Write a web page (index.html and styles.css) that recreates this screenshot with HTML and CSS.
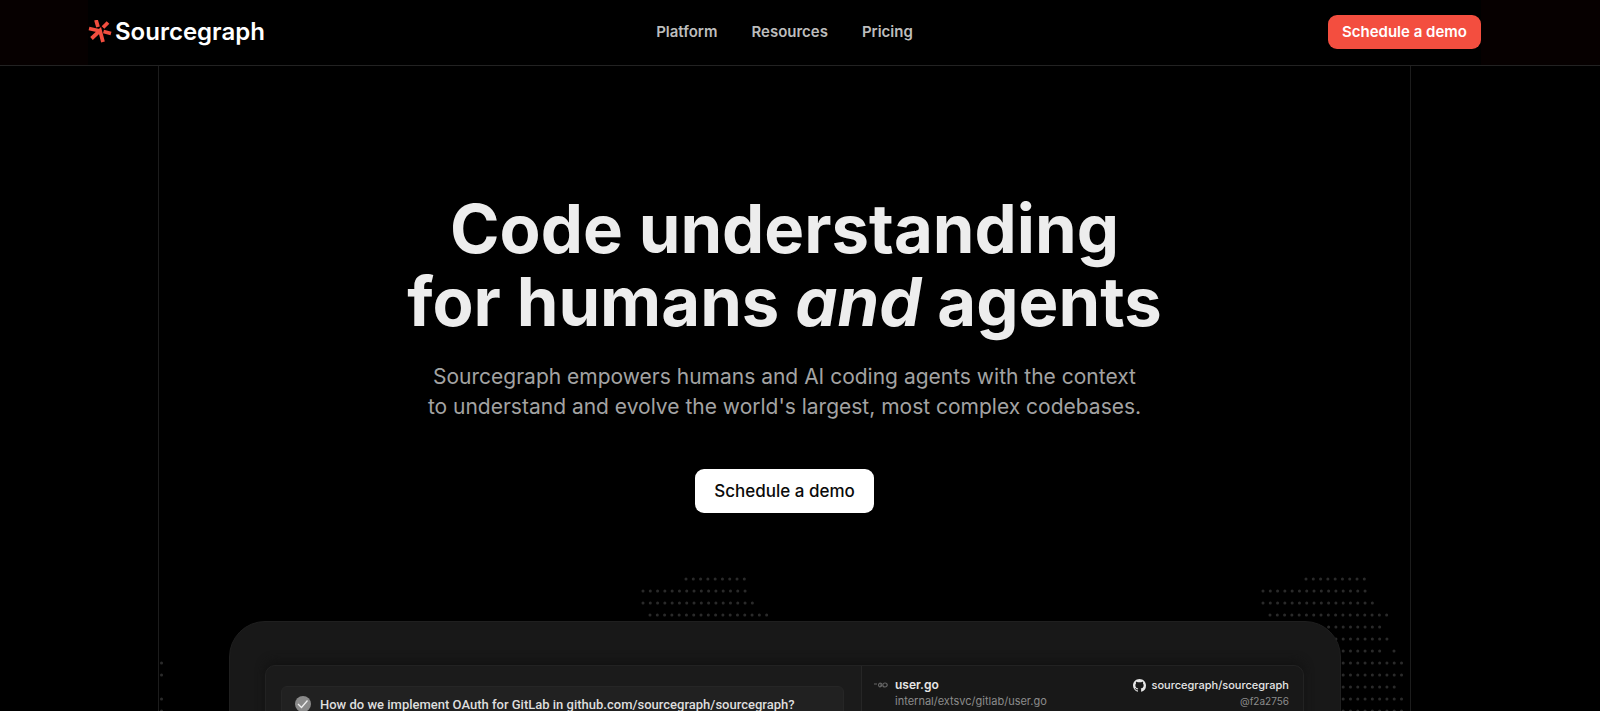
FILE: index.html
```
<!DOCTYPE html>
<html lang="en">
  <head>
    <meta charset="UTF-8" />
    <meta name="viewport" content="width=device-width, initial-scale=1.0" />
    <title>Sourcegraph</title>
    <link rel="stylesheet" href="styles.css">
  </head>
  <body>
    <header class="header">
      <div class="header-inner">
        <a class="logo" href="#">
          <svg class="logo-mark" viewBox="0 0 24 24" width="24" height="24" aria-hidden="true">
            <g stroke="#f34e3f" stroke-width="3.8" fill="none">
              <path d="M8 0l2 7M20 2.500l-5 5M1 8.500l11 2.500M3.500 18.500l8.500-8l3 11.500M15.500 11.500l7.500 2" />
            </g>
          </svg>
          <span class="logo-text">Sourcegraph</span>
        </a>
        <nav class="nav">
          <a href="#">Platform</a>
          <a href="#">Resources</a>
          <a href="#">Pricing</a>
        </nav>
        <button type="button" class="btn btn-red">Schedule a demo</button>
      </div>
    </header>

    <main class="page">
      <section class="frame">
        <svg class="dots" aria-hidden="true">
          <defs>
            <pattern id="map" x="-138" y="0" width="620" height="200" patternUnits="userSpaceOnUse">
              <path d="M45 6h60M2 18h103M2 30h111M9 42h118M2 54h118M2 66h126M2 78h118M133 78h1M2 90h140M2 102h140M2 114h133M2 126h140M2 138h140" />
            </pattern>
          </defs>
          <rect width="100%" height="100%" fill="url(#map)" />
        </svg>

        <div class="hero">
          <h1>Code understanding<br>for humans <em>and</em> agents</h1>
          <p>Sourcegraph empowers humans and AI coding agents with the context<br>to understand and evolve the world's largest, most complex codebases.</p>
          <button type="button" class="btn btn-white">Schedule a demo</button>
        </div>

        <div class="card">
          <div class="screen">
            <div class="chat">
              <div class="prompt">
                <svg viewBox="0 0 16 16" width="16" height="16" aria-hidden="true">
                  <circle cx="8" cy="8" r="8" fill="#8a8a8a" />
                  <path d="M3 8l3.500 3.500l6-7" fill="none" stroke="#eee" stroke-width="1.3" />
                </svg>
                <span>How do we implement OAuth for GitLab in github.com/sourcegraph/sourcegraph?</span>
              </div>
            </div>
            <div class="source">
              <svg class="go" viewBox="0 0 14 6" width="14" height="6" aria-hidden="true">
                <g fill="none" stroke="#666" stroke-width="1.2">
                  <path d="M0 2h3M8 2Q5 0 4.500 3Q5 6 7.500 4V3H6" />
                  <ellipse cx="11" cy="3" rx="2.200" ry="2" />
                </g>
              </svg>
              <div class="file">
                <div class="name">user.go</div>
                <div class="sub">internal/extsvc/gitlab/user.go</div>
              </div>
              <div class="repo">
                <div class="name">
                  <svg viewBox="0 0 16 16" width="13" height="13" aria-hidden="true">
                    <path fill="#e6e6e6" d="M8 0C3.580 0 0 3.580 0 8c0 3.540 2.290 6.530 5.470 7.590.4.070.55-.17.55-.38 0-.19-.01-.82-.01-1.490-2.010.37-2.530-.49-2.690-.94-.09-.23-.48-.94-.82-1.130-.28-.15-.68-.52-.01-.53.63-.01 1.080.58 1.230.82.72 1.210 1.870.87 2.330.66.07-.52.28-.87.51-1.070-1.780-.2-3.640-.89-3.640-3.950 0-.87.31-1.590.82-2.150-.08-.2-.36-1.020.08-2.120 0 0 .67-.21 2.200.82.64-.18 1.320-.27 2-.27s1.360.09 2 .27c1.530-1.040 2.200-.82 2.200-.82.44 1.100.16 1.920.08 2.120.51.56.82 1.270.82 2.150 0 3.070-1.870 3.750-3.650 3.950.29.25.54.73.54 1.480 0 1.070-.01 1.930-.01 2.200 0 .21.15.46.55.38A8.010 8.010 0 0 0 16 8c0-4.420-3.580-8-8-8z" />
                  </svg>
                  sourcegraph/sourcegraph
                </div>
                <div class="sub">@f2a2756</div>
              </div>
            </div>
          </div>
        </div>
      </section>
    </main>
  </body>
</html>
```
FILE: styles.css
```
* {
  box-sizing: border-box;
}
body {
  margin: 0;
  height: 100vh;
  display: flex;
  flex-direction: column;
  overflow: hidden;
  background-color: #000;
  color: #ededed;
  font-family: Inter, "Liberation Sans", sans-serif;
}
.header {
  flex: none;
  height: 66px;
  padding: 0 119px 0 88px;
  background-color: #060000;
  border-bottom: 1px solid #222;
}
.header-inner {
  height: 65px;
  padding-bottom: 2px;
  display: grid;
  grid-template-columns: 1fr auto 1fr;
  align-items: center;
  background-color: #000;
}
.logo {
  display: flex;
  align-items: center;
  gap: 3px;
  color: #fff;
  text-decoration: none;
}
.logo-text {
  font-size: 24px;
  line-height: 32px;
  font-weight: 600;
}
.nav {
  display: flex;
  gap: 34px;
}
.nav a {
  color: #bdbdbd;
  font-size: 15px;
  line-height: 20px;
  font-weight: 600;
  text-decoration: none;
}
.btn {
  border: 0;
  border-radius: 9px;
  font-family: inherit;
  font-weight: 600;
  cursor: pointer;
}
.btn-red {
  justify-self: end;
  width: 153px;
  height: 34px;
  padding: 0;
  background-color: #f34e3f;
  color: #fff;
  font-size: 15px;
}
.btn-white {
  width: 179px;
  height: 44px;
  padding: 0;
  background-color: #fff;
  color: #0a0a0a;
  font-size: 17px;
  font-weight: 500;
}
.page {
  flex: 1;
  min-height: 0;
  padding: 0 189px 0 158px;
}
.frame {
  position: relative;
  height: 100%;
  border: 1px solid #1c1c1c;
  border-width: 0 1px;
  overflow: hidden;
}
.dots {
  position: absolute;
  top: 507px;
  left: 0;
  width: 100%;
  height: 145px;
}
.dots path {
  fill: none;
  stroke: #2a2a2a;
  stroke-width: 3;
  stroke-linecap: round;
  stroke-dasharray: 0 7.29;
}
.hero {
  position: relative;
  padding-top: 126px;
  text-align: center;
}
h1 {
  margin: 0;
  font-size: 67px;
  line-height: 73px;
  font-weight: 700;
}
.hero p {
  margin: 24px 0 47px;
  color: #a3a3a3;
  font-size: 21px;
  line-height: 30px;
}
.card {
  position: relative;
  height: 400px;
  margin: 108px 69px 0 70px;
  padding: 43px 36px 0 35px;
  border: 1px solid #1f1f1f;
  border-radius: 36px;
  background-color: #181818;
}
.screen {
  display: flex;
  height: 360px;
  border: 1px solid #222;
  border-radius: 10px;
  background-color: #1b1b1b;
  box-shadow: 0 -4px 10px #121212;
}
.chat {
  width: 596px;
  padding: 20px 17px 0 15px;
  border-right: 1px solid #262626;
}
.prompt {
  display: flex;
  align-items: center;
  gap: 9px;
  height: 120px;
  padding: 0 13px 84px;
  border: 1px solid #262626;
  border-radius: 6px;
  background-color: #212121;
  color: #dedede;
  font-family: Roboto, Inter, sans-serif;
  font-size: 13px;
  font-weight: 500;
  white-space: nowrap;
}
.source {
  flex: 1;
  display: flex;
  padding: 10px 14px 0 12px;
  background-color: #181818;
  border-radius: 0 10px 0 0;
}
.go {
  margin: 6px 7px 0 0;
}
.name {
  display: flex;
  align-items: center;
  gap: 5px;
  color: #e6e6e6;
  font-size: 12px;
  line-height: 18px;
  font-weight: 600;
}
.sub {
  color: #8c8c8c;
  font-size: 11px;
  line-height: 14px;
}
.repo {
  margin-left: auto;
  text-align: right;
}
.repo .name {
  font-size: 11px;
  font-weight: 500;
}
.repo .sub {
  font-size: 10px;
}
```
